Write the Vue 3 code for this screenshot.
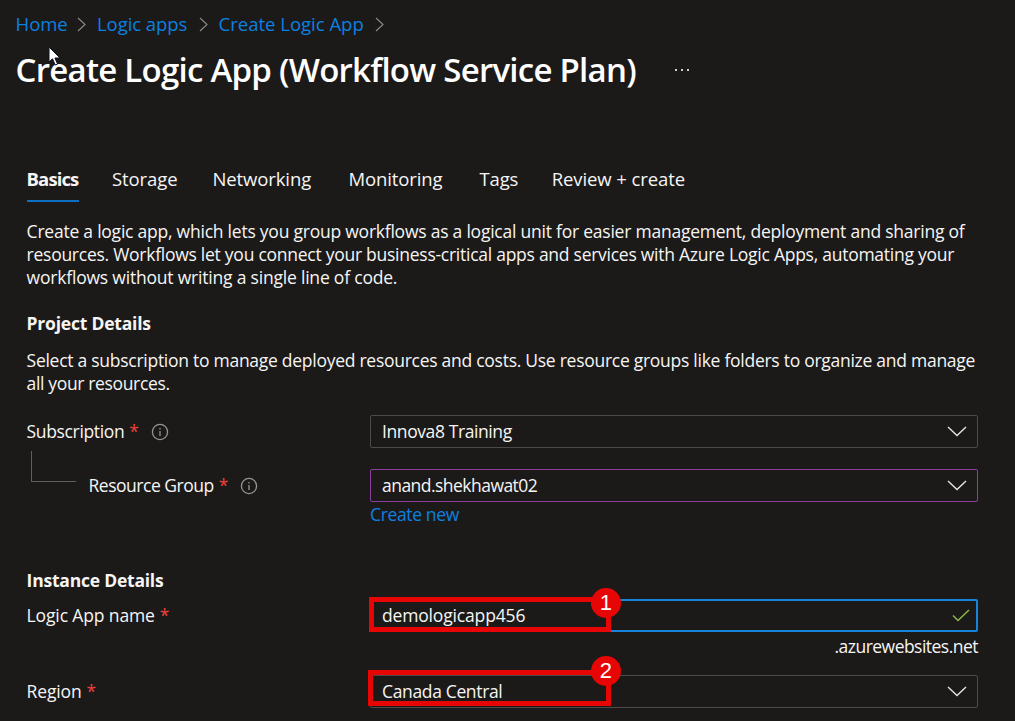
<script setup>
const crumbs = [
  { label: 'Home', cls: 'c-home' },
  { label: 'Logic apps', cls: 'c-apps' },
  { label: 'Create Logic App', cls: 'c-create' },
]
const tabs = [
  { label: 'Basics', cls: 't-basics', active: true },
  { label: 'Storage', cls: 't-storage' },
  { label: 'Networking', cls: 't-network' },
  { label: 'Monitoring', cls: 't-monitor' },
  { label: 'Tags', cls: 't-tags' },
  { label: 'Review + create', cls: 't-review' },
]
</script>

<template>
  <main class="blade">
    <nav class="crumbs">
      <span v-for="c in crumbs" :key="c.label" class="crumb" :class="c.cls">
        <a>{{ c.label }}</a>
        <svg class="sep" viewBox="0 0 9 15"><path d="M1 1l7 6.5L1 14" /></svg>
      </span>
    </nav>
    <header class="head">
      <h1>Create Logic App (Workflow Service Plan)</h1>
      <svg class="dots" viewBox="0 0 15 2"><path d="M0 0h2v2H0zM6 0h2v2H6zM12 0h2v2h-2z" /></svg>
    </header>
    <svg class="cursor" viewBox="0 0 13 20">
      <path d="M1 1v15l3.5-3.2 2.7 6.2 2.4-1-2.7-6H12z" />
    </svg>

    <div class="tabs">
      <span v-for="t in tabs" :key="t.label" class="tab" :class="[t.cls, { active: t.active }]">{{ t.label }}</span>
    </div>

    <p class="intro">
      <span class="p1">Create a logic app, which lets you group workflows as a logical unit for easier management, deployment and sharing of</span>
      <span class="p2">resources. Workflows let you connect your business-critical apps and services with Azure Logic Apps, automating your</span>
      <span class="p3">workflows without writing a single line of code.</span>
    </p>
    <h2 class="project">Project Details</h2>
    <p class="about">
      <span class="p4">Select a subscription to manage deployed resources and costs. Use resource groups like folders to organize and manage</span>
      <span class="p5">all your resources.</span>
    </p>

    <div class="row r-sub">
      <label><span class="l-sub">Subscription</span><b>*</b>
        <svg class="info" viewBox="0 0 18 18"><circle cx="9" cy="9" r="7.6" /><path d="M9 8v5M9 5v1.4" /></svg>
      </label>
      <div class="field"><span class="v-sub">Innova8 Training</span>
        <svg class="chev" viewBox="0 0 20 11"><path d="M1 1l9 8.6L19 1" /></svg>
      </div>
    </div>
    <div class="row r-group">
      <label><i class="elbow"></i><span class="l-group">Resource Group</span><b>*</b>
        <svg class="info" viewBox="0 0 18 18"><circle cx="9" cy="9" r="7.6" /><path d="M9 8v5M9 5v1.4" /></svg>
      </label>
      <div class="field purple"><span class="v-group">anand.shekhawat02</span>
        <svg class="chev" viewBox="0 0 20 11"><path d="M1 1l9 8.6L19 1" /></svg>
      </div>
    </div>
    <a class="new">Create new</a>

    <h2 class="instance">Instance Details</h2>
    <div class="row r-name">
      <label><span class="l-name">Logic App name</span><b>*</b></label>
      <div class="field focus"><span class="v-name">demologicapp456</span>
        <svg class="check" viewBox="0 0 18 13"><path d="M1 6.5l5 5L17 1" /></svg>
        <div class="mark m1"><em>1</em></div>
      </div>
    </div>
    <div class="suffix"><span>.azurewebsites.net</span></div>
    <div class="row r-region">
      <label><span class="l-region">Region</span><b>*</b></label>
      <div class="field"><span class="v-region">Canada Central</span>
        <svg class="chev" viewBox="0 0 20 11"><path d="M1 1l9 8.6L19 1" /></svg>
        <div class="mark m2"><em>2</em></div>
      </div>
    </div>
  </main>
</template>

<style>
html, body { background: #1b1a19; overflow: hidden; }
</style>

<style scoped>
.blade {
  box-sizing: border-box; width: 1015px; height: 721px; position: relative; overflow: hidden;
  background: #1b1a19; color: #f6f5f4; padding: 11px 37px 0 26.6px;
  font: 17.5px/23px "Open Sans", "Noto Sans", sans-serif; white-space: nowrap;
  letter-spacing: -0.35px;
}
svg { fill: none; display: block; flex: none; }
h1, h2, p { margin: 0; }
a { color: #0c80e0; }
.crumbs { display: flex; height: 26px; margin-left: -11px; font-size: 18.5px; line-height: 26px; letter-spacing: -0.05px; }
.crumb { display: flex; align-items: center; justify-content: space-between; }
.c-home { width: 70.4px; margin-right: 11px; }
.c-apps { width: 111px; margin-right: 10.6px; }
.c-create { width: 165px; letter-spacing: 0; }
.sep { width: 9px; height: 15px; stroke: #8d8c8b; stroke-width: 1.1; }
.head { display: flex; align-items: center; height: 44px; margin: 11px 0 0 -11px; }
h1 { font-size: 33px; line-height: 44px; font-weight: 600; width: 659.4px; color: #fff; letter-spacing: -0.74px; }
.dots { width: 15px; height: 2px; fill: #d0cfce; }
.cursor { position: absolute; left: 48px; top: 46px; width: 13px; height: 20px; fill: #fff; stroke: #101020; stroke-width: 1; }
.tabs { display: flex; height: 39px; margin-top: 71px; font-size: 18.5px; line-height: 32px; letter-spacing: -0.1px; }
.tab { box-sizing: border-box; }
.active { font-weight: 700; border-bottom: 2.5px solid #0f6fc0; }
.t-basics { width: 52px; margin-right: 33.4px; letter-spacing: -0.9px; }
.t-storage { width: 100.4px; }
.t-network { width: 136px; }
.t-monitor { width: 131px; }
.t-tags { width: 72.4px; }
.intro, .about { display: flex; flex-direction: column; line-height: 23.2px; }
.intro { margin-top: 18px; }
.p1 { letter-spacing: -0.23px; }
.p2 { letter-spacing: -0.26px; }
.p3 { letter-spacing: -0.2px; }
.p4 { letter-spacing: -0.27px; }
h2 { font-size: 17.5px; line-height: 24px; font-weight: 700; }
.project { margin-top: 21px; letter-spacing: -0.22px; }
.about { margin-top: 14px; }
.row { display: flex; height: 33px; align-items: center; }
.r-sub { margin-top: 20px; }
.r-group { margin-top: 21px; }
.r-name { margin-top: 7px; }
.r-region { margin-top: 16px; }
label { width: 343.4px; display: flex; align-items: center; flex: none; }
label b { color: #f1403c; font-weight: 400; margin-left: 5px; width: 9px; }
.l-group { letter-spacing: -0.48px; }
.l-name { letter-spacing: -0.13px; }
.l-region { letter-spacing: -0.15px; }
.info { width: 18px; height: 18px; margin-left: 12.4px; stroke: #979593; stroke-width: 1.3; }
.elbow { width: 44px; height: 30px; border-left: 1px solid #605e5c; border-bottom: 1px solid #605e5c; margin: -38px 12.5px 0 4.4px; }
.field {
  box-sizing: border-box; width: 608px; height: 33px; border: 1px solid #4d4b49; border-radius: 2px;
  padding: 0 10px 0 11px; display: flex; align-items: center; justify-content: space-between; position: relative;
}
.v-sub { letter-spacing: -0.4px; }
.v-group { letter-spacing: -0.53px; }
.v-name { letter-spacing: -0.16px; }
.purple { border-color: #8b409e; }
.focus { border: 2px solid #1683dd; padding: 0 6px 0 10px; }
.chev { width: 20px; height: 11px; stroke: #e6e5e4; stroke-width: 1.4; }
.check { width: 18px; height: 13px; stroke: #8cb84a; stroke-width: 1.5; }
.new { display: block; width: 120px; margin: 1px 0 0 343.4px; }
.instance { margin-top: 42px; letter-spacing: -0.22px; }
.suffix { height: 27px; display: flex; justify-content: flex-end; line-height: 28px; letter-spacing: -0.52px; }
.mark { position: absolute; box-sizing: border-box; border: 5px solid #e80505; height: 35px; }
.m1 { left: -3px; top: -4px; width: 242px; }
.m2 { left: -3px; top: -6px; width: 243px; height: 36px; }
em {
  position: absolute; right: -15px; top: -14px; width: 30px; height: 30px; border-radius: 50%; background: #e80505;
  color: #fff; font: 22px/30px "Liberation Sans", sans-serif; text-align: center; letter-spacing: 0;
}
.m2 em { top: -19px; }
</style>
